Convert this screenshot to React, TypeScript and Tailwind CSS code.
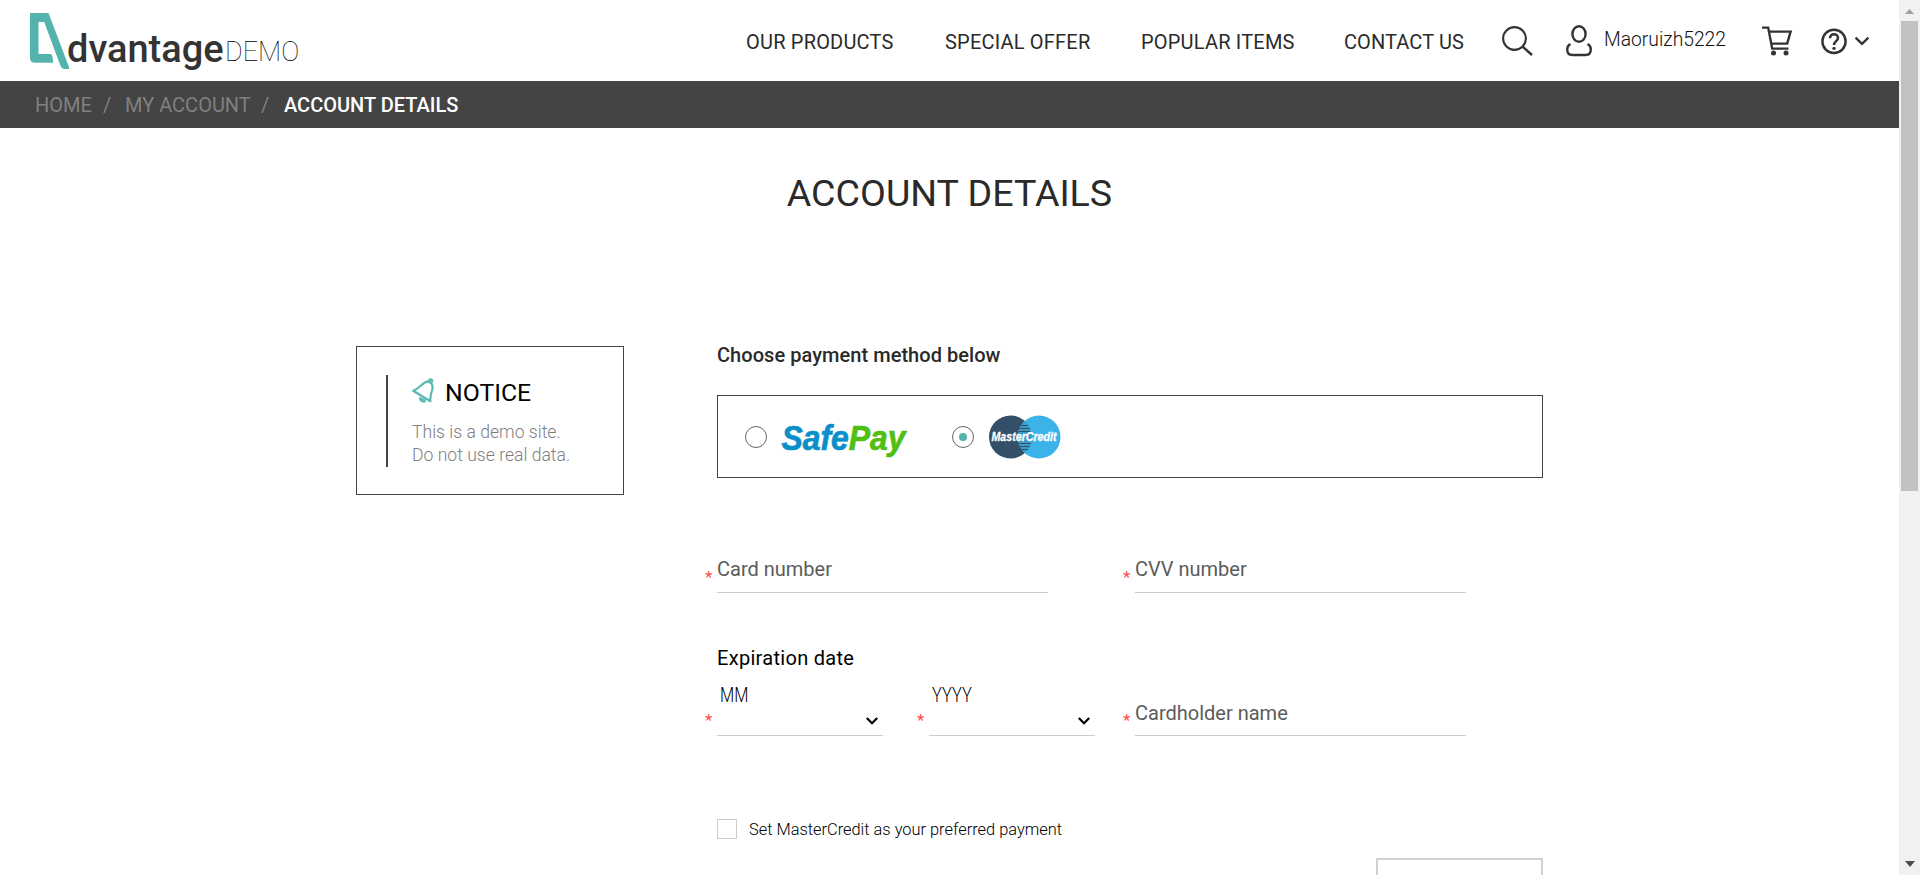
import type { ReactNode } from "react";

function Logo() {
  return (
    <div className="flex h-[81px] w-[270px] items-start">
      <svg className="mt-[13px] h-14 w-[39px] shrink-0" viewBox="0 0 39 56">
        <path
          fill="#55b3ad"
          fillRule="evenodd"
          d="M0 0H18.5L39 54V56H34Q31.5 55.5 30.5 53L14.2 9H8.5V41H20Q21.8 41 22.2 42.6L23.4 49.7H5Q0 49.7 0 45Z"
        />
      </svg>
      <span className="mt-[26px] -ml-[2px] w-[158px] text-[38px] leading-[46px] font-medium text-[#333]">dvantage</span>
      <span className="mt-[26px] text-[27px] leading-[52px] font-thin text-black">DEMO</span>
    </div>
  );
}

function SearchIcon() {
  return (
    <svg className="mt-[26px] h-[30px] w-[31px]" viewBox="0 0 31 30" fill="none" stroke="#333">
      <circle cx="12.5" cy="12.5" r="11.4" strokeWidth="2.1" />
      <path d="M20.5 20.5L30 29" strokeWidth="2.4" />
    </svg>
  );
}

function UserIcon() {
  return (
    <svg className="mt-[25px] h-8 w-[26px]" viewBox="0 0 26 32" fill="none" stroke="#333" strokeWidth="2.4">
      <ellipse cx="13" cy="9" rx="6.6" ry="7.7" />
      <path d="M4.5 19.2C2.4 20 1.2 22 1.2 24.5C1.2 28.5 3 30 6.5 30H19.5C23 30 24.8 28.5 24.8 24.5C24.8 22 23.6 20 21.5 19.2" />
    </svg>
  );
}

function CartIcon() {
  return (
    <svg className="mt-[26px] h-[30px] w-[31px]" viewBox="0 0 31 30" fill="none" stroke="#333" strokeWidth="2.4">
      <path d="M0 1.6H6.2L10.2 22.6H26.5M7 5.6H28.6L25.2 17.6H9.4" />
      <circle cx="11.5" cy="27" r="2.5" fill="#333" stroke="none" />
      <circle cx="24" cy="27" r="2.5" fill="#333" stroke="none" />
    </svg>
  );
}

function HelpIcon() {
  return (
    <svg className="mt-[28px] h-[27px] w-[49px]" viewBox="0 0 49 27" fill="none" stroke="#333">
      <circle cx="13" cy="13.4" r="11.6" strokeWidth="2.4" />
      <path d="M9 10.3C9 4.8 17 4.8 17 10C17 13 13 13.3 13 17" strokeWidth="2.5" />
      <circle cx="13" cy="20.3" r="1.6" fill="#333" stroke="none" />
      <path d="M34.6 9.6L41 15.8L47.4 9.6" strokeWidth="2.3" />
    </svg>
  );
}

function Header() {
  return (
    <header className="flex h-[81px] shrink-0 items-start bg-white pl-[30px] text-[#2a2a2a]">
      <Logo />
      <nav className="mt-[31px] ml-[446px] flex text-[20px] leading-[22px] tracking-[0.2px]">
        <a className="w-[199px]">OUR PRODUCTS</a>
        <a className="w-[196px]">SPECIAL OFFER</a>
        <a className="w-[203px]">POPULAR ITEMS</a>
        <a className="w-[158px] tracking-[0.1px]">CONTACT US</a>
      </nav>
      <SearchIcon />
      <div className="ml-[33px] flex w-[196px] items-start">
        <UserIcon />
        <span className="mt-[29px] ml-3 text-[19.3px] leading-[22px] font-light text-[#111]">Maoruizh5222</span>
      </div>
      <CartIcon />
      <div className="ml-[28px]">
        <HelpIcon />
      </div>
    </header>
  );
}

function Breadcrumbs() {
  return (
    <div className="flex h-[47px] shrink-0 items-center bg-[#444] pt-px pl-[35px] text-[20px] leading-[24px] text-[#808080]">
      <span className="w-[68px]">HOME</span>
      <span className="w-[22px]">/</span>
      <span className="w-[136px]">MY ACCOUNT</span>
      <span className="w-[23px]">/</span>
      <span className="font-medium text-white">ACCOUNT DETAILS</span>
    </div>
  );
}

function BellIcon() {
  return (
    <svg className="h-[26px] w-[22px]" viewBox="0 0 22 26" fill="none" stroke="#5cbab5" strokeWidth="2.2" strokeLinejoin="round">
      <path d="M1.2 12.8C7.5 11 9.8 4.4 16 3.3C20.8 5.2 21.2 9 20 12.5C18.8 16 18 19.5 18.4 23.2Z" />
      <circle cx="18.6" cy="2.8" r="1.5" />
      <path d="M8 20.2Q8.5 24 12.6 23.6L12.6 22.2Z" fill="#5cbab5" />
    </svg>
  );
}

function Notice() {
  return (
    <aside className="mt-[346px] h-[149px] w-[268px] border border-[#444] pt-7 pl-[29px]">
      <div className="h-[92px] border-l-2 border-[#444] pl-[24px]">
        <div className="flex pt-[3px]">
          <BellIcon />
          <h2 className="ml-[11px] text-[24.8px] leading-[30px] text-black">NOTICE</h2>
        </div>
        <p className="mt-[13px] text-[17.6px] leading-[23px] font-light whitespace-nowrap text-[#808080]">
          This is a demo site.
          <br />
          Do not use real data.
        </p>
      </div>
    </aside>
  );
}

function SafePay() {
  return (
    <svg className="h-[50px] w-[136px] overflow-visible" viewBox="0 0 136 50">
      <text
        x="0.5"
        y="37.5"
        fontFamily="Liberation Sans"
        fontSize="34.5"
        fontStyle="italic"
        fontWeight="700"
        strokeWidth="0.7"
        textLength="124"
        lengthAdjust="spacingAndGlyphs"
      >
        <tspan fill="#0b8fcb" stroke="#0b8fcb">Safe</tspan>
        <tspan fill="#4fc013" stroke="#4fc013">Pay</tspan>
      </text>
    </svg>
  );
}

function MasterCredit() {
  return (
    <svg className="h-11 w-[72px]" viewBox="0 0 72 44">
      <circle cx="21.5" cy="22" r="21.5" fill="#345068" />
      <circle cx="50" cy="22" r="21.5" fill="#3bb2e8" />
      <path d="M35.7 6A21.5 21.5 0 0 1 35.7 38A21.5 21.5 0 0 1 35.7 6Z" fill="#3a9cca" />
      <path d="M32 10.5H39M30.5 13.5H41M29.5 16.5H42M29.5 28.5H42M30.5 31.5H41M32 34.5H39" stroke="#345068" />
      <text
        x="2.5"
        y="26.3"
        fill="#fff"
        stroke="#fff"
        strokeWidth="0.3"
        fontFamily="Liberation Sans"
        fontSize="12.5"
        fontStyle="italic"
        fontWeight="700"
        textLength="65"
        lengthAdjust="spacingAndGlyphs"
      >
        MasterCredit
      </text>
    </svg>
  );
}

function Radio({ checked }: { checked?: boolean }) {
  return (
    <span className="flex size-[22px] shrink-0 items-center justify-center rounded-full border border-[#666]">
      {checked && <span className="size-2 rounded-full bg-[#55b3ad]" />}
    </span>
  );
}

function Star({ className }: { className: string }) {
  return <span className={`w-3 shrink-0 text-[17px] leading-[20px] text-[#ff4b4b] ${className}`}>*</span>;
}

function Field({ label, className }: { label: string; className: string }) {
  return (
    <div className="flex">
      <Star className="mt-[19px]" />
      <div className={`h-[45px] w-[331px] border-b border-[#ccc] text-[20px] leading-[24px] text-[#5c5c5c] ${className}`}>{label}</div>
    </div>
  );
}

function Select({ children }: { children: ReactNode }) {
  return (
    <div className="flex">
      <Star className="mt-[32px]" />
      <div className="flex h-[58px] w-[166px] justify-between border-b border-[#ccc] pr-[5px] pl-[3px]">
        <span className="origin-left scale-x-[0.82] pt-[6px] text-[20px] leading-[22px] font-light text-black">{children}</span>
        <svg className="mt-[39px] h-2 w-3" viewBox="0 0 12 8" fill="none" stroke="#000" strokeWidth="2.2">
          <path d="M0.8 1L6 6.2L11.2 1" />
        </svg>
      </div>
    </div>
  );
}

function PaymentForm() {
  return (
    <section className="ml-[81px] w-[838px]">
      <h3 className="mt-[343px] ml-3 text-[20px] leading-[24px] font-medium tracking-[0.05px] text-[#2a2a2a]">Choose payment method below</h3>
      <div className="mt-[28px] ml-3 flex h-[83px] items-center border border-[#444] pl-[27px]">
        <Radio />
        <div className="ml-[14px] w-[171px]">
          <SafePay />
        </div>
        <Radio checked />
        <div className="ml-[15px]">
          <MasterCredit />
        </div>
      </div>
      <div className="mt-[70px] flex gap-[75px]">
        <Field label="Card number" className="pt-[9px]" />
        <Field label="CVV number" className="pt-[9px]" />
      </div>
      <h4 className="mt-[53px] ml-3 text-[20px] leading-[24px] tracking-[0.3px] text-black">Expiration date</h4>
      <div className="mt-[8px] flex items-end">
        <Select>MM</Select>
        <div className="ml-[34px]">
          <Select>YYYY</Select>
        </div>
        <div className="ml-[28px]">
          <Field label="Cardholder name" className="pt-[10px]" />
        </div>
      </div>
      <label className="mt-[83px] ml-3 flex items-center">
        <span className="size-5 border border-[#ccc]" />
        <span className="ml-3 pt-[2px] text-[16.4px] leading-[18px] font-light text-black">Set MasterCredit as your preferred payment</span>
      </label>
      <button className="mt-[19px] ml-[671px] block h-12 w-[167px] border-2 border-[#d0d0d0]" />
    </section>
  );
}

function Scrollbar() {
  return (
    <div className="flex w-[21px] shrink-0 flex-col items-center justify-between bg-[#f1f1f1]">
      <svg className="h-[491px] w-[17px]" viewBox="0 0 17 491">
        <path d="M4 14L8.5 9L13 14Z" fill="#a0a0a0" />
        <rect y="21" width="17" height="470" fill="#c1c1c1" />
      </svg>
      <svg className="mb-2 h-[6px] w-[10px]" viewBox="0 0 10 6">
        <path d="M0 0H10L5 6Z" fill="#4d4d4d" />
      </svg>
    </div>
  );
}

export default function App() {
  return (
    <div className="flex h-[875px] w-[1920px] overflow-hidden bg-white font-['Roboto',sans-serif]">
      <div className="flex w-[1899px] flex-col">
        <Header />
        <Breadcrumbs />
        <main className="min-h-0 flex-1">
          <h1 className="mt-[42px] h-[46px] text-center text-[37.6px] leading-[46px] text-[#2a2a2a]">ACCOUNT DETAILS</h1>
          <div className="-mt-[216px] flex items-start pl-[356px]">
            <Notice />
            <PaymentForm />
          </div>
        </main>
      </div>
      <Scrollbar />
    </div>
  );
}
